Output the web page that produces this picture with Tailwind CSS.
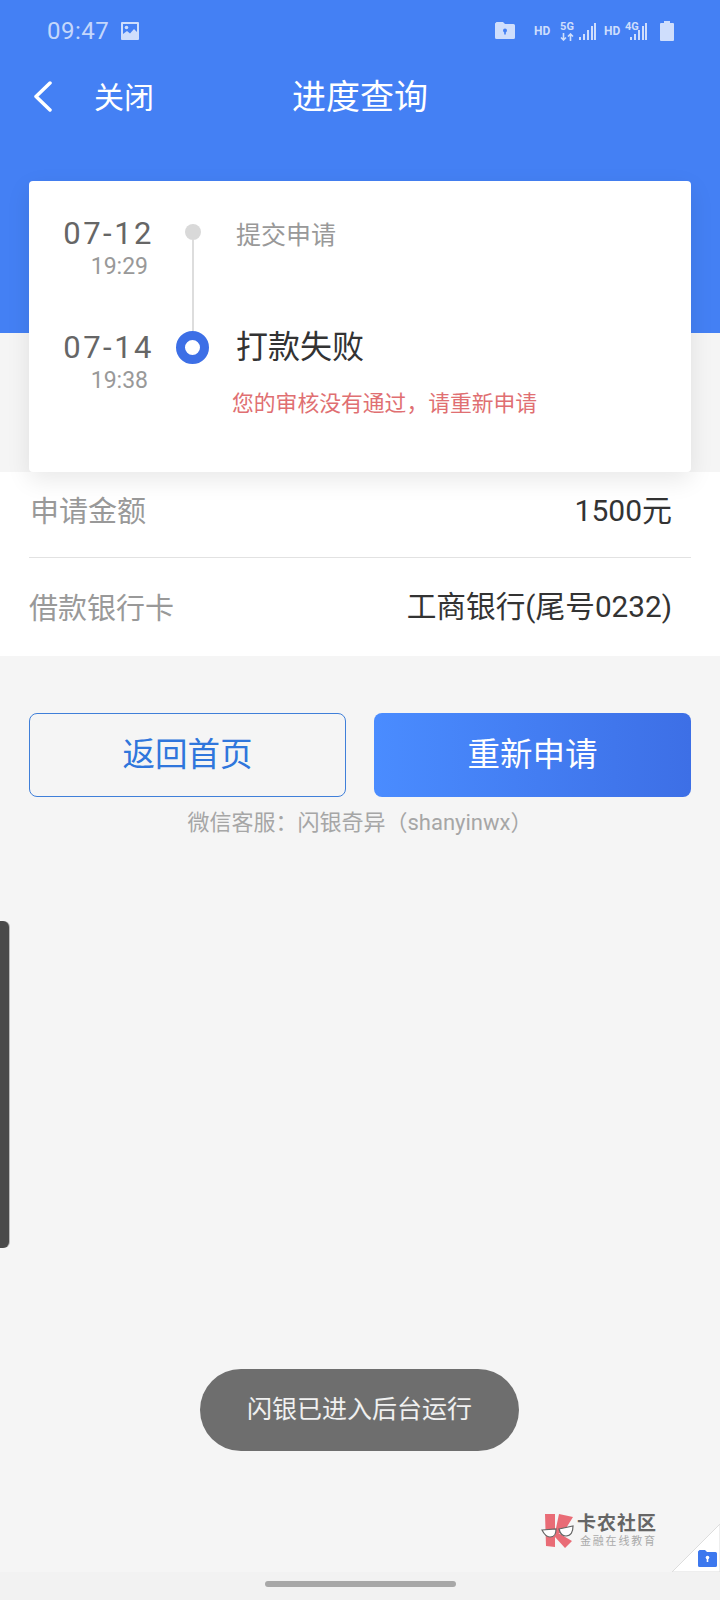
<!DOCTYPE html>
<html lang="zh-CN">

<head>
    <meta charset="UTF-8">
    <meta name="viewport" content="width=device-width, initial-scale=1.0">
    <title>进度查询</title>
    <script src="https://cdn.jsdelivr.net/npm/@tailwindcss/browser@4"></script>
</head>

<body class="font-['Roboto','Noto_Sans_CJK_SC',sans-serif]">
    <div class="relative w-[720px] h-[1600px] overflow-hidden bg-[#f5f5f5]">

        <!-- Blue header -->
        <header class="h-[333px] bg-[#4480f4] text-white">
            <!-- Status bar -->
            <div class="h-[60px] flex items-center pl-[47px] pr-[46px] pt-[1px]">
                <span class="text-[24px] tracking-[0.5px] text-white/70">09:47</span>
                <svg class="ml-[11px] w-[20px] h-[20px]" viewBox="0 0 20 20">
                    <path fill="#cfdefc" fill-rule="evenodd" d="M2 1h16a1 1 0 0 1 1 1v16a1 1 0 0 1-1 1H2a1 1 0 0 1-1-1V2a1 1 0 0 1 1-1zm1 2v10l4-3 3 2.500 4-4.500 3 3V3z" />
                    <circle cx="6.500" cy="6.500" r="1.800" fill="#cfdefc" />
                </svg>
                <div class="ml-auto flex items-center text-[#cfdefc]">
                    <svg class="w-[20px] h-[17px]" viewBox="0 0 20 17">
                        <path fill="#cfdefc" d="M1.500 0H8l2 2h8.500A1.500 1.500 0 0 1 20 3.500V15.500a1.500 1.500 0 0 1-1.500 1.500h-17A1.500 1.500 0 0 1 0 15.500V1.500z" />
                        <circle cx="10" cy="8.500" r="2" fill="#4480f4" />
                        <rect x="9.200" y="8.500" width="1.600" height="4" fill="#4480f4" />
                    </svg>
                    <span class="ml-[19px] w-[15px] text-[12px] font-bold leading-none">HD</span>
                    <div class="ml-[11px] w-[14px] flex flex-col items-center">
                        <span class="text-[11px] font-bold leading-[11px]">5G</span>
                        <svg class="mt-[1px] w-[14px] h-[8px]" viewBox="0 0 14 8">
                            <path fill="none" stroke="#cfdefc" stroke-width="1.600" d="M3.500 0v7M1 4.500 3.500 7 6 4.500M10.500 8V1M8 3.500 10.500 1 13 3.500" />
                        </svg>
                    </div>
                    <svg class="ml-[4px] w-[18px] h-[18px]" viewBox="0 0 18 18">
                        <path stroke="#cfdefc" stroke-width="2" d="M2 18v-3M6 18v-6M10 18V8M14 18V4M17 18V1" />
                    </svg>
                    <span class="ml-[8px] w-[15px] text-[12px] font-bold leading-none">HD</span>
                    <div class="relative ml-[6px] w-[22px] h-[18px]">
                        <span class="absolute left-0 -top-[1px] text-[11px] font-bold leading-[11px]">4G</span>
                        <svg class="w-[22px] h-[18px]" viewBox="0 0 22 18">
                            <path stroke="#cfdefc" stroke-width="2" d="M6 18v-3M10 18v-6M14 18V8M18 18V4M21 18V1" />
                        </svg>
                    </div>
                    <svg class="ml-[13px] w-[14px] h-[20px]" viewBox="0 0 14 20">
                        <path fill="#cfdefc" d="M4 0h6v2h3a1 1 0 0 1 1 1v16a1 1 0 0 1-1 1H1a1 1 0 0 1-1-1V3a1 1 0 0 1 1-1h3z" />
                    </svg>
                </div>
            </div>
            <!-- Nav bar -->
            <div class="relative h-[74px] flex items-center">
                <svg class="ml-[33px] w-[20px] h-[32px]" viewBox="0 0 20 32">
                    <path fill="none" stroke="#fff" stroke-width="3.500" stroke-linecap="round" stroke-linejoin="round" d="M17 2 3 15.500 17 29" />
                </svg>
                <span class="ml-[42px] -translate-x-[1px] text-[30px]">关闭</span>
                <span class="absolute left-0 right-0 text-center text-[34px]">进度查询</span>
            </div>
        </header>

        <!-- Timeline card -->
        <section class="relative mx-[29px] -mt-[152px] h-[291px] rounded-[4px] bg-white shadow-[0_8px_24px_rgba(0,0,0,0.09)]">
            <div class="flex h-[146px] pt-[35px]">
                <div class="w-[125px] flex flex-col items-end shrink-0">
                    <span class="text-[31px] leading-[36px] tracking-[2.500px] text-[#666]">07-12</span>
                    <span class="text-[23px] leading-[30px] text-[#999] pr-[6px]">19:29</span>
                </div>
                <div class="ml-[22px] w-[33px] flex flex-col items-center shrink-0 -mb-[4px]">
                    <span class="mt-[8px] w-[16px] h-[16px] rounded-full bg-[#d9d9d9] shrink-0"></span>
                    <span class="flex-1 w-[2px] bg-[#ddd]"></span>
                </div>
                <span class="ml-[27px] pt-[2px] text-[25px] leading-[36px] text-[#999]">提交申请</span>
            </div>
            <div class="flex pt-[3px]">
                <div class="w-[125px] flex flex-col items-end shrink-0">
                    <span class="text-[31px] leading-[36px] tracking-[2.500px] text-[#666]">07-14</span>
                    <span class="text-[23px] leading-[30px] text-[#999] pr-[6px]">19:38</span>
                </div>
                <div class="ml-[22px] w-[33px] pt-[1px] shrink-0">
                    <span class="block w-[33px] h-[33px] rounded-full border-[9px] border-[#3d6fe6] bg-white"></span>
                </div>
                <div class="ml-[23px] -mt-[1px]">
                    <div class="pl-[4px] text-[32px] leading-[36px] text-[#333]">打款失败</div>
                    <div class="mt-[23px] text-[21.800px] leading-[32px] text-[#e06f72]">您的审核没有通过，请重新申请</div>
                </div>
            </div>
        </section>

        <!-- Loan details -->
        <section class="bg-white h-[184px] px-[29px]">
            <div class="h-[86px] pb-[2px] flex items-center justify-between border-b-[1px] border-[#e2e2e2] pr-[19px]">
                <span class="pl-[1px] mb-[2px] text-[29px] text-[#999]">申请金额</span>
                <span class="mb-[6px] text-[30px] text-[#333]">1500元</span>
            </div>
            <div class="h-[98px] flex items-center justify-between pr-[19px]">
                <span class="mt-[6px] text-[29px] text-[#999]">借款银行卡</span>
                <span class="text-[29.700px] text-[#333]">工商银行(尾号0232)</span>
            </div>
        </section>

        <!-- Actions -->
        <div class="mt-[57px] mx-[29px] flex gap-[28px]">
            <button class="w-[317px] h-[84px] rounded-[8px] border border-[#3f7fd9] text-[32.500px] text-[#2f76dc]">返回首页</button>
            <button class="w-[317px] h-[84px] rounded-[8px] bg-gradient-to-r from-[#4a8cff] to-[#3d6fe6] text-[32.500px] text-white">重新申请</button>
        </div>
        <p class="mt-[12px] text-center text-[22px] leading-[28px] text-[#a6a6a6]">微信客服：闪银奇异（shanyinwx）</p>

        <!-- Edge handle -->
        <div class="absolute left-0 top-[921px] w-[9px] h-[327px] rounded-r-[6px] bg-[#4a4a4a] shadow-[1px_0_0_#bbb]"></div>

        <!-- Toast -->
        <div class="absolute left-[200px] top-[1369px] w-[319px] h-[82px] rounded-full bg-[#6e6e6e] flex items-center justify-center text-[25px] text-white/90">闪银已进入后台运行</div>

        <!-- Watermark -->
        <div class="absolute left-[541px] top-[1513px] flex items-center">
            <svg class="w-[36px] h-[36px]" viewBox="0 0 36 36">
                <path fill="#e96c76" d="M4 1h10v33l-9-1zM18 1l14 3-10 16h-8zM14 18l17 10-7 7-10-11z" />
                <path fill="#fff" stroke="#666" stroke-width="1.200" d="M1 17l14-1c0 5-1 8-6 8-4 0-6-3-8-7zM18 16l14-3c0 6-2 10-7 10-4 0-6-3-7-7z" />
            </svg>
            <div class="flex flex-col">
                <span class="text-[19px] leading-[20px] tracking-[1px] font-bold text-[#666]">卡农社区</span>
                <span class="mt-[1px] pl-[3px] text-[11px] leading-[14px] tracking-[1.800px] text-[#aaa]">金融在线教育</span>
            </div>
        </div>

        <!-- Corner fold -->
        <svg class="absolute left-[672px] top-[1524px] w-[48px] h-[48px]" viewBox="0 0 48 48">
            <path fill="#fff" stroke="#ddd" stroke-width="1" d="M48 0v48H0z" />
            <path fill="#3d78ee" d="M27.500 26H33l2 2h8.500a1.500 1.500 0 0 1 1.500 1.500v12a1.500 1.500 0 0 1-1.500 1.500h-16a1.500 1.500 0 0 1-1.500-1.500v-14z" />
            <circle cx="35.500" cy="33.500" r="1.800" fill="#fff" />
            <rect x="34.700" y="34" width="1.600" height="4" fill="#fff" />
        </svg>

        <!-- Navigation bar -->
        <div class="absolute left-0 right-0 bottom-0 h-[28px] bg-[#f2f2f2] flex justify-center pt-[9px]">
            <span class="w-[191px] h-[6px] rounded-full bg-[#a8a8a8]"></span>
        </div>
    </div>
</body>

</html>
